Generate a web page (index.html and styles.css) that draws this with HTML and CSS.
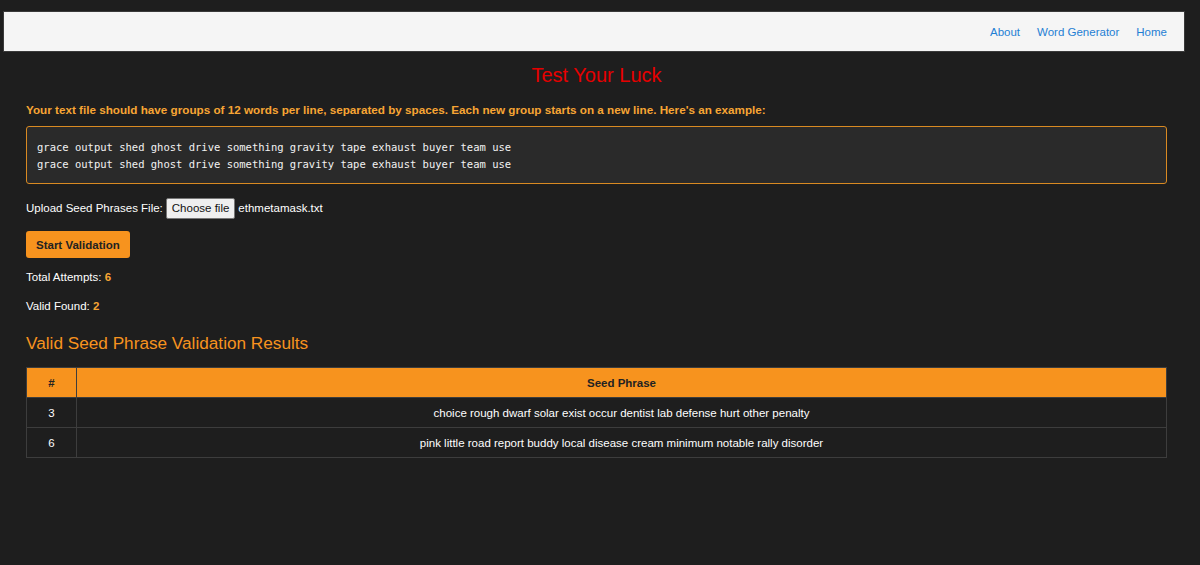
FILE: index.html
```html
<!doctype html>
<html lang="en">
  <head>
    <meta charset="UTF-8" />
    <meta name="viewport" content="width=device-width, initial-scale=1.0" />
    <title>Test Your Luck</title>
    <link rel="stylesheet" href="styles.css">
  </head>
  <body>
    <nav class="navbar">
      <a href="#" class="nav-link">About</a>
      <a href="#" class="nav-link">Word Generator</a>
      <a href="#" class="nav-link">Home</a>
    </nav>

    <div class="container">
      <h1 class="title">Test Your Luck</h1>

      <p class="instructions">
        Your text file should have groups of 12 words per line, separated by spaces. Each new group starts on a new line. Here's an example:
      </p>

      <pre class="example-box">grace output shed ghost drive something gravity tape exhaust buyer team use
grace output shed ghost drive something gravity tape exhaust buyer team use</pre>

      <!-- File upload -->
      <div class="upload-row">
        <label class="upload-label">Upload Seed Phrases File:</label>
        <span class="file-btn">Choose file</span>
        <span class="file-name">ethmetamask.txt</span>
      </div>

      <button class="start-btn">Start Validation</button>

      <p class="stat stat-total">Total Attempts: <span class="stat-value">6</span></p>
      <p class="stat stat-valid">Valid Found: <span class="stat-value">2</span></p>

      <!-- Results -->
      <h2 class="results-title">Valid Seed Phrase Validation Results</h2>

      <table class="results-table">
        <thead>
          <tr>
            <th class="col-num">#</th>
            <th>Seed Phrase</th>
          </tr>
        </thead>
        <tbody>
          <tr>
            <td>3</td>
            <td>choice rough dwarf solar exist occur dentist lab defense hurt other penalty</td>
          </tr>
          <tr>
            <td>6</td>
            <td>pink little road report buddy local disease cream minimum notable rally disorder</td>
          </tr>
        </tbody>
      </table>
    </div>
  </body>
</html>
```

FILE: styles.css
```css
* {
  margin: 0;
  padding: 0;
  box-sizing: border-box;
}

body {
  font-family: 'Liberation Sans', Arial, sans-serif;
  font-size: 11.5px;
  background: #1e1e1e;
  color: #fff;
  min-height: 100vh;
}

.navbar {
  display: flex;
  justify-content: flex-end;
  align-items: center;
  gap: 17px;
  height: 41px;
  margin: 11px 15px 0 3px;
  padding-right: 17px;
  background: #f5f5f5;
  border: 1px solid #3a3a3a;
}

.nav-link {
  color: #1f7fd4;
  text-decoration: none;
  font-size: 11.5px;
}

.container {
  margin: 0 33px 0 26px;
}

.title {
  text-align: center;
  color: #e60000;
  font-size: 20px;
  font-weight: 400;
  line-height: 23px;
  padding-top: 12px;
}

.instructions {
  color: #f7a534;
  font-size: 11.7px;
  font-weight: 700;
  line-height: 14px;
  margin-top: 16px;
}

.example-box {
  margin-top: 9px;
  padding: 12px 10px 10px;
  background: #2a2a2a;
  border: 1px solid #d98a22;
  border-radius: 3px;
  font-family: 'DejaVu Sans Mono', 'Liberation Mono', monospace;
  font-size: 10.5px;
  line-height: 17px;
  color: #f2f2f2;
}

.upload-row {
  display: flex;
  align-items: center;
  height: 22px;
  margin-top: 13px;
}

.upload-label {
  margin-right: 3px;
}

.file-btn {
  display: inline-block;
  height: 21px;
  line-height: 19px;
  padding: 0 5px;
  background: #efefef;
  color: #111;
  border: 1px solid #767676;
  border-radius: 2px;
  margin-right: 3px;
}

.start-btn {
  display: block;
  margin-top: 12px;
  height: 27px;
  padding: 0 10px;
  background: #f7931e;
  color: #222;
  border: none;
  border-radius: 3px;
  font-family: inherit;
  font-size: 11.5px;
  font-weight: 700;
  cursor: pointer;
}

.stat {
  line-height: 14px;
}

.stat-total {
  margin-top: 12px;
}

.stat-valid {
  margin-top: 15px;
}

.stat-value {
  color: #f7a534;
  font-weight: 700;
}

.results-title {
  color: #f7931e;
  font-size: 17.2px;
  font-weight: 400;
  line-height: 20px;
  margin-top: 20px;
}

.results-table {
  width: 100%;
  margin-top: 14px;
  border-collapse: collapse;
}

.results-table th,
.results-table td {
  height: 30px;
  text-align: center;
  border: 1px solid #3d3d3d;
  font-size: 11.5px;
}

.results-table th {
  background: #f7931e;
  color: #222;
  font-weight: 700;
}

.results-table td {
  color: #fff;
}

.col-num {
  width: 50px;
}
```
